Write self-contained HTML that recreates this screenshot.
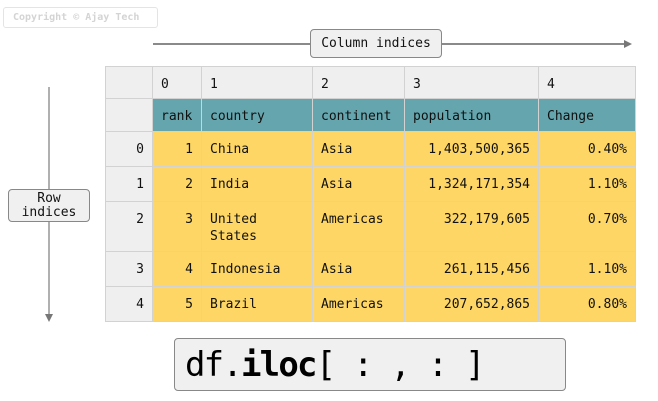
<!DOCTYPE html>
<html><head><style>
body{margin:0;width:658px;height:401px;background:#fff;position:relative;overflow:hidden;font-family:"DejaVu Sans Mono","Liberation Mono",monospace;font-size:13px;color:#111}
.a{position:absolute;box-sizing:border-box}
.c{position:absolute;box-sizing:border-box;border-right:1px solid #d2d2d2;border-bottom:1px solid #d2d2d2;padding:9px 8px 0 8px;line-height:17px}
.r{text-align:right}
.g{background:#efefef}.t{background:#64a5ae}.y{background:#fdd665}
.box{border:1px solid #888;border-radius:4px;background:#f0f0f0;text-align:center}
</style></head><body>
<div class="a" style="left:3px;top:7px;width:155px;height:21px;border:1px solid #e4e4e4;border-radius:3px;color:#d4d4d4;font-size:10px;font-weight:bold;line-height:19px;padding-left:9px">Copyright © Ajay Tech</div>
<div class="a" style="left:153px;top:43px;width:472px;height:2px;background:#8a8a8a"></div>
<div class="a" style="left:624px;top:40px;width:0;height:0;border-left:8px solid #777;border-top:4px solid transparent;border-bottom:4px solid transparent"></div>
<div class="a box" style="left:310px;top:29px;width:132px;height:29px;line-height:28px">Column indices</div>
<div class="a" style="left:48px;top:87px;width:2px;height:229px;background:#b0b0b0"></div>
<div class="a" style="left:45px;top:314px;width:0;height:0;border-top:8px solid #777;border-left:4px solid transparent;border-right:4px solid transparent"></div>
<div class="a box" style="left:8px;top:189px;width:82px;height:33px;line-height:14px;padding-top:2px">Row<br>indices</div>
<div id="tb"></div>
<div class="a box" style="left:174px;top:338px;width:392px;height:53px;text-align:left;padding-left:10px;font-size:34px;letter-spacing:-1.8px;line-height:52px;color:#000">df.<b>iloc</b>[ : , : ]</div>
<script>
var xs=[105,153,202,313,405,539,636],ys=[66,99,132,167,202,252,287,322];
var rows=[["","0","1","2","3","4"],["","rank","country","continent","population","Change"],
["0","1","China","Asia","1,403,500,365","0.40%"],["1","2","India","Asia","1,324,171,354","1.10%"],
["2","3","United States","Americas","322,179,605","0.70%"],["3","4","Indonesia","Asia","261,115,456","1.10%"],
["4","5","Brazil","Americas","207,652,865","0.80%"]];
var h="";
for(var i=0;i<7;i++)for(var j=0;j<6;j++){
var cl="c ";
if(i==0||j==0)cl+="g";else if(i==1)cl+="t";else cl+="y";
if(i>=2&&(j==0||j==1||j==4||j==5))cl+=" r";
var st="left:"+xs[j]+"px;top:"+ys[i]+"px;width:"+(xs[j+1]-xs[j])+"px;height:"+(ys[i+1]-ys[i])+"px;";
if(i==0)st+="border-top:1px solid #d2d2d2;";
if(j==0)st+="border-left:1px solid #d2d2d2;";
if(i==4&&j==2)st+="width:111px;";
h+='<div class="'+cl+'" style="'+st+'">'+rows[i][j]+'</div>';}
document.getElementById("tb").innerHTML=h;
</script>
</body></html>
